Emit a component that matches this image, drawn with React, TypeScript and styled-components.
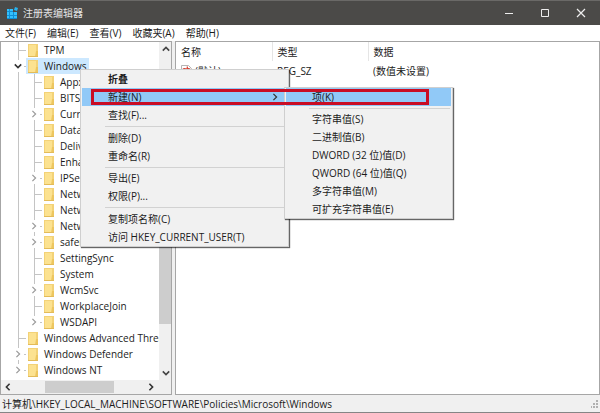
import React from "react";
import styled, { createGlobalStyle, css } from "styled-components";

const GlobalStyle = createGlobalStyle`
  * { box-sizing: border-box; }
  html, body { margin: 0; height: 100%; overflow: hidden; }
  body, button, table {
    font-family: "Open Sans", "Noto Sans CJK SC", sans-serif;
    font-size: 10px;
    line-height: 16px;
    color: #1b1b1b;
  }
  button { border: 0; padding: 0; background: none; text-align: left; white-space: nowrap; }
  ul { list-style: none; margin: 0; padding: 0; }
`;

const Window = styled.main`
  display: flex;
  flex-direction: column;
  height: 100vh;
  background: #fff;
  border-bottom: 1px solid #858585;
`;

const TitleBar = styled.header`
  display: flex;
  align-items: center;
  flex: none;
  height: 25px;
  padding: 0 1px 0 7px;
  background: #4b4a48;
  border-top: 1px solid #6a6967;
`;

const Title = styled.h1`
  flex: 1;
  margin: 0 0 0 5px;
  font-size: 10px;
  font-weight: 400;
  color: #e4e4e4;
`;

const CaptionButton = styled.button`
  display: flex;
  align-items: center;
  justify-content: center;
  width: 36px;
  height: 24px;
`;

const MenuBar = styled.nav`
  display: flex;
  flex: none;
  height: 16px;
`;

const MenuBarButton = styled.button`
  padding: 0 6px 0 5px;
`;

const Panes = styled.div`
  display: flex;
  flex: 1;
  min-height: 0;
  gap: 3px;
  background: #f0f0f0;
`;

const Pane = styled.section`
  display: flex;
  flex-direction: column;
  min-width: 0;
  background: #fff;
  border: 1px solid #a6a6a6;
`;

const TreePane = styled(Pane)`
  flex: 0 0 172px;
`;

const ValuePane = styled(Pane)`
  flex: 1;
`;

const TreeArea = styled.div`
  display: flex;
  flex: 1;
  min-height: 0;
`;

const Tree = styled.ul`
  flex: 1;
  min-width: 0;
  overflow: hidden;
`;

const TreeRow = styled.li<{ $outer?: boolean }>`
  display: flex;
  align-items: center;
  height: 16px;
  padding-left: ${(p) => (p.$outer ? 0 : 9)}px;
`;

type GuideKind = "line" | "branch" | "toggle" | "open" | "lastToggle";

const stroke = "linear-gradient(#c4c4c4, #c4c4c4)";
const toggleGuide = css`background: ${stroke} 8px 0 / 1px 2px no-repeat, ${stroke} 8px 14px / 1px 2px no-repeat, ${stroke} 14px 8px / 2px 1px no-repeat;`;

const guides: Record<GuideKind, ReturnType<typeof css>> = {
  line: css`background: ${stroke} 8px 0 / 1px 16px no-repeat;`,
  branch: css`background: ${stroke} 8px 0 / 1px 16px no-repeat, ${stroke} 9px 8px / 7px 1px no-repeat;`,
  toggle: toggleGuide,
  open: toggleGuide,
  lastToggle: css`background: ${stroke} 8px 0 / 1px 2px no-repeat, ${stroke} 14px 8px / 2px 1px no-repeat;`,
};

const Guide = styled.span<{ $kind: GuideKind }>`
  display: flex;
  align-items: center;
  justify-content: center;
  flex: none;
  width: 16px;
  height: 16px;
  ${(p) => guides[p.$kind]}
`;

const TreeButton = styled.button<{ $selected?: boolean }>`
  display: flex;
  align-items: center;
  gap: 5px;
  height: 16px;
  padding: 0 2px;
  background: ${(p) => (p.$selected ? "#cce8ff" : "transparent")};
`;

const VerticalBar = styled.div`
  display: flex;
  flex-direction: column;
  flex: none;
  width: 12px;
  background: #f0f0f0;
`;

const HorizontalBar = styled.div`
  display: flex;
  flex: none;
  height: 14px;
  padding-right: 13px;
  background: #f0f0f0;
`;

const ScrollButton = styled.button`
  display: flex;
  align-items: center;
  justify-content: center;
  flex: none;
  width: 14px;
  height: 14px;
`;

const VerticalTrack = styled.div`
  display: flex;
  flex: 1;
  flex-direction: column;
  padding: 90px 0 42px;
`;

const HorizontalTrack = styled.div`
  display: flex;
  flex: 1;
  padding: 1px 30px;
`;

const Thumb = styled.div`
  flex: 1;
  background: #cdcdcd;
`;

const ValueTable = styled.table`
  width: 100%;
  border-collapse: collapse;
  table-layout: fixed;
  th, td {
    height: 19px;
    padding: 0 0 0 5px;
    font-weight: 400;
    text-align: left;
    white-space: nowrap;
  }
  th + th { border-left: 1px solid #e5e5e5; }
  th:first-child { width: 96px; }
  th:nth-child(2) { width: 96px; }
`;

const ValueName = styled.span`
  display: flex;
  align-items: center;
  gap: 3px;
`;

const StatusBar = styled.footer`
  display: flex;
  align-items: center;
  justify-content: space-between;
  flex: none;
  height: 17px;
  padding: 1px 1px 0 2px;
  background: #f0f0f0;
`;

const Menu = styled.div<{ $x: number; $y: number; $width: number }>`
  position: absolute;
  left: ${(p) => p.$x}px;
  top: ${(p) => p.$y}px;
  width: ${(p) => p.$width}px;
  display: flex;
  flex-direction: column;
  background: #f1f1f1;
  border: 1px solid #cfcfcf;
  box-shadow: 1px 1px 1px rgba(0, 0, 0, 0.6);
`;

const MenuItem = styled.button<{ $active?: boolean; $strong?: boolean }>`
  display: flex;
  align-items: center;
  justify-content: space-between;
  height: 18px;
  margin: 0 1px;
  padding: 0 8px 0 26px;
  font-weight: ${(p) => (p.$strong ? 700 : 400)};
  background: ${(p) => (p.$active ? "#91c9f7" : "transparent")};
`;

const Separator = styled.hr<{ $size: number }>`
  width: calc(100% - 26px);
  height: ${(p) => p.$size}px;
  margin: 0 2px 0 24px;
  border: 0;
  background: linear-gradient(#d2d2d2, #d2d2d2) 0 2px / 100% 1px no-repeat;
`;

const Highlight = styled.div`
  position: absolute;
  left: 91px;
  top: 89px;
  width: 338px;
  height: 16px;
  border: 3px solid #c90d24;
  pointer-events: none;
`;

const chevronPaths = {
  right: "M3 1l4 4-4 4",
  left: "M7 1L3 5l4 4",
  up: "M1 7l4-4 4 4",
  down: "M1 3l4 4 4-4",
};

function Chevron({ dir, color, weight = 1.5 }: { dir: keyof typeof chevronPaths; color: string; weight?: number }) {
  return (
    <svg width="8" height="8" viewBox="0 0 10 10" fill="none" stroke={color} strokeWidth={weight} aria-hidden="true">
      <path d={chevronPaths[dir]} />
    </svg>
  );
}

function Folder() {
  return (
    <svg width="11" height="13" viewBox="0 0 11 13" aria-hidden="true">
      <path d="M0 0h10v13H0z" fill="#f3d277" />
      <path d="M1 1h7v11H1z" fill="#fce290" />
      <path d="M8 7h2v6H7z" fill="#edc65f" />
      <path d="M0 12.500h10" stroke="#e3bb58" />
    </svg>
  );
}

function AppIcon() {
  return (
    <svg width="11" height="12" viewBox="0 0 11 12" aria-hidden="true">
      <path d="M0 2h6v3h4v7H0z" fill="#0f8fd6" />
      <path d="M0 2h2v2H0zM3 2h3v2H3zM0 5h2v3H0zM3 5h3v3H3zM7 5h3v3H7zM0 9h2v2H0zM3 9h3v2H3zM7 9h3v2H7z" fill="#35c0fb" />
      <path d="M8 0l3 1-1 3-3-1z" fill="#27b2ee" />
    </svg>
  );
}

function StringIcon() {
  return (
    <svg width="11" height="12" viewBox="0 0 11 12" aria-hidden="true">
      <path d="M.5.5h7l3 3v8H.5z" fill="#fff" stroke="#b5b5b5" />
      <g fill="none" stroke="#d43a2c" strokeWidth="1.200">
        <circle cx="3.300" cy="5" r="1.400" />
        <path d="M5 3.300v3.400M6.300 1.500v5.200" />
        <circle cx="7.700" cy="5" r="1.400" />
      </g>
    </svg>
  );
}

type Node = { name: string; guides: GuideKind[]; selected?: boolean };

const child = (name: string, kind: GuideKind = "branch"): Node => ({ name, guides: ["line", kind] });

const nodes: Node[] = [
  { name: "TPM", guides: ["branch"] },
  { name: "Windows", guides: ["open"], selected: true },
  child("Appx"),
  child("BITS"),
  child("Current", "toggle"),
  child("Data"),
  child("Delivery"),
  child("Enhanc"),
  child("IPSec", "toggle"),
  child("Netwo"),
  child("Networ"),
  child("Network", "toggle"),
  child("safer", "toggle"),
  child("SettingSync"),
  child("System"),
  child("WcmSvc", "toggle"),
  child("WorkplaceJoin"),
  child("WSDAPI", "lastToggle"),
  { name: "Windows Advanced Threat", guides: ["branch"] },
  { name: "Windows Defender", guides: ["toggle"] },
  { name: "Windows NT", guides: ["lastToggle"] },
];

const menus = ["文件(F)", "编辑(E)", "查看(V)", "收藏夹(A)", "帮助(H)"];

export default function App() {
  return (
    <>
      <GlobalStyle />
      <Window>
        <TitleBar>
          <AppIcon />
          <Title>注册表编辑器</Title>
          <CaptionButton aria-label="最小化">
            <svg width="10" height="10" stroke="#eee" fill="none"><path d="M1 5.500h8" /></svg>
          </CaptionButton>
          <CaptionButton aria-label="最大化">
            <svg width="10" height="10" stroke="#eee" fill="none"><path d="M1.500 1.500h7v7h-7z" /></svg>
          </CaptionButton>
          <CaptionButton aria-label="关闭">
            <svg width="10" height="10" stroke="#eee" strokeWidth="1.200" fill="none"><path d="M1 1l8 8M9 1L1 9" /></svg>
          </CaptionButton>
        </TitleBar>
        <MenuBar>
          {menus.map((m) => <MenuBarButton key={m}>{m}</MenuBarButton>)}
        </MenuBar>
        <Panes>
          <TreePane>
            <TreeArea>
              <Tree>
                {nodes.map((n) => (
                  <TreeRow key={n.name}>
                    {n.guides.map((g, i) => (
                      <Guide key={i} $kind={g}>
                        {(g === "toggle" || g === "lastToggle") && <Chevron dir="right" color="#9a9a9a" />}
                        {g === "open" && <Chevron dir="down" color="#333" weight={2} />}
                      </Guide>
                    ))}
                    <TreeButton $selected={n.selected}>
                      <Folder />
                      {n.name}
                    </TreeButton>
                  </TreeRow>
                ))}
                <TreeRow $outer aria-hidden="true"><Folder /></TreeRow>
              </Tree>
              <VerticalBar>
                <ScrollButton aria-label="向上滚动"><Chevron dir="up" color="#444" weight={2} /></ScrollButton>
                <VerticalTrack><Thumb /></VerticalTrack>
                <ScrollButton aria-label="向下滚动"><Chevron dir="down" color="#444" weight={2} /></ScrollButton>
              </VerticalBar>
            </TreeArea>
            <HorizontalBar>
              <ScrollButton aria-label="向左滚动"><Chevron dir="left" color="#333" weight={2} /></ScrollButton>
              <HorizontalTrack><Thumb /></HorizontalTrack>
              <ScrollButton aria-label="向右滚动"><Chevron dir="right" color="#333" weight={2} /></ScrollButton>
            </HorizontalBar>
          </TreePane>
          <ValuePane>
            <ValueTable>
              <thead>
                <tr><th>名称</th><th>类型</th><th>数据</th></tr>
              </thead>
              <tbody>
                <tr>
                  <td><ValueName><StringIcon />(默认)</ValueName></td>
                  <td>REG_SZ</td>
                  <td>(数值未设置)</td>
                </tr>
              </tbody>
            </ValueTable>
          </ValuePane>
        </Panes>
        <StatusBar>
          <span>计算机\HKEY_LOCAL_MACHINE\SOFTWARE\Policies\Microsoft\Windows</span>
          <svg width="8" height="8" fill="#b0b0b0" aria-hidden="true">
            <path d="M5 0h2v2H5zM2 3h2v2H2zM5 3h2v2H5zM0 6h1v2H0zM2 6h2v2H2zM5 6h2v2H5z" />
          </svg>
        </StatusBar>
      </Window>
      <Menu $x={80} $y={69} $width={209} aria-label="Windows">
        <MenuItem $strong>折叠</MenuItem>
        <MenuItem $active>新建(N)<Chevron dir="right" color="#333" /></MenuItem>
        <MenuItem>查找(F)...</MenuItem>
        <Separator $size={5} />
        <MenuItem>删除(D)</MenuItem>
        <MenuItem>重命名(R)</MenuItem>
        <Separator $size={4} />
        <MenuItem>导出(E)</MenuItem>
        <MenuItem>权限(P)...</MenuItem>
        <Separator $size={5} />
        <MenuItem>复制项名称(C)</MenuItem>
        <MenuItem>访问 HKEY_CURRENT_USER(T)</MenuItem>
      </Menu>
      <Menu $x={284} $y={87} $width={169} aria-label="新建">
        <MenuItem $active>项(K)</MenuItem>
        <Separator $size={4} />
        <MenuItem>字符串值(S)</MenuItem>
        <MenuItem>二进制值(B)</MenuItem>
        <MenuItem>DWORD (32 位)值(D)</MenuItem>
        <MenuItem>QWORD (64 位)值(Q)</MenuItem>
        <MenuItem>多字符串值(M)</MenuItem>
        <MenuItem>可扩充字符串值(E)</MenuItem>
      </Menu>
      <Highlight />
    </>
  );
}
